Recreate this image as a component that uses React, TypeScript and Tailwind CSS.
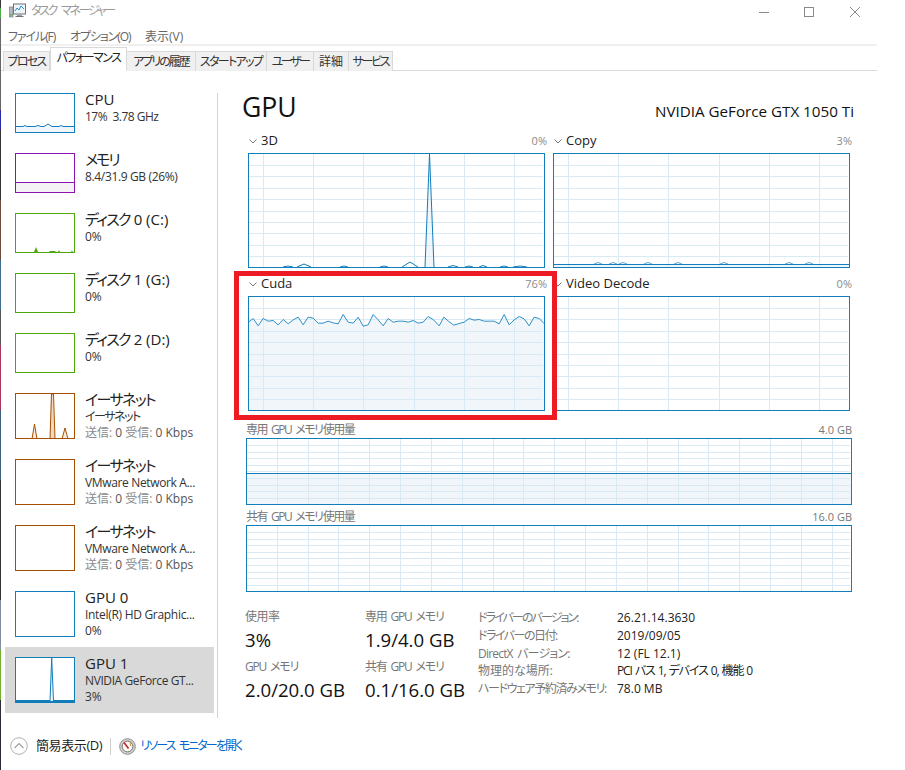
const FONT = "[font-family:'Open_Sans','Noto_Sans_CJK_JP',sans-serif] [font-feature-settings:'palt']";

const BLUE = "#117dbb";
const GRID = "#d9eaf4";
const FILL = "#f1f6fa";

const CUDA: [number, number][] = [
  [56,187],[70,176],[85,198],[100,176],[115,184],[130,182],[145,195],[160,179],[175,192],[190,180],[205,172],[220,195],[235,172],[250,175],[265,190],[280,190],[295,184],[310,189],[325,192],[340,164],[355,187],[370,190],[385,172],[400,199],[415,195],[430,164],[445,180],[460,198],[475,176],[490,187],[505,184],[520,184],[535,187],[550,182],[565,190],[580,187],[595,170],[610,179],[628,198],[642,172],[657,185],[672,196],[688,191],[703,187],[718,176],[733,181],[748,179],[763,184],[778,184],[793,184],[808,192],[823,164],[838,195],[853,180],[868,170],[883,177],[898,198],[913,172],[928,176],[942,190],
];
const cudaPts = CUDA.map(([x, y]) => [(x - 56) / 3 + 0.5, (y - 110) / 3 + 0.5] as [number, number]);

const V_SMALL = [15, 65, 115, 166, 216, 266];
const H_SMALL = [12, 23, 35, 46, 58, 69, 80, 92, 103];
const V_MEM = Array.from({ length: 19 }, (_, i) => Math.round(30.83 * (i + 1)));
const H_MEM = [7, 14, 20, 27, 33, 40, 47, 53, 60];

function Chart({ w, h, v, hz, children, under }: { w: number; h: number; v: number[]; hz: number[]; children?: React.ReactNode; under?: React.ReactNode }) {
  return (
    <svg width={w} height={h} className="block">
      {under}
      <g shapeRendering="crispEdges" stroke={GRID} strokeWidth="1">
        {v.map((x) => <line key={x} x1={x + 0.5} y1={0} x2={x + 0.5} y2={h} />)}
        {hz.map((y) => <line key={y} x1={0} y1={y + 0.5} x2={w - 2} y2={y + 0.5} />)}
      </g>
      {children}
      <rect x="0.5" y="0.5" width={w - 1} height={h - 1} fill="none" stroke={BLUE} shapeRendering="crispEdges" />
    </svg>
  );
}

function bump(cx: number, hw: number, ht: number, base: number) {
  return `M${cx - hw} ${base}L${cx} ${base - ht}L${cx + hw} ${base}`;
}

function Chart3D() {
  const base = 114;
  return (
    <Chart w={297} h={115} v={V_SMALL} hz={H_SMALL}
      under={<path d="M177 114L181.5 1L186 114Z" fill={FILL} />}>
      <path
        d={[bump(40, 5, 1, base), bump(56, 7, 3, base), bump(96, 4, 1, base), bump(136, 4, 1, base), bump(162, 8, 5, base), bump(205, 5, 1.5, base), bump(221, 4, 1, base), bump(235, 4, 1.5, base), bump(256, 4, 1, base), bump(272, 7, 1, base)].join("")}
        fill="none" stroke={BLUE} strokeWidth="1" />
      <path d="M177 114L181.5 1L186 114" fill="none" stroke={BLUE} strokeWidth="1" />
    </Chart>
  );
}

function ChartCopy() {
  return (
    <Chart w={297} h={115} v={V_SMALL} hz={H_SMALL}
      under={<rect x="0" y="111" width="297" height="4" fill={FILL} />}>
      <path d={[45, 60, 70, 95, 125, 171, 236, 256].map((c) => bump(c, 4, 1.5, 111)).join("")} fill="none" stroke="#5aa6d3" />
      <line x1="0" y1="111.5" x2="297" y2="111.5" stroke={BLUE} shapeRendering="crispEdges" />
    </Chart>
  );
}

function ChartCuda() {
  const line = cudaPts.map(([x, y], i) => `${i ? "L" : "M"}${x} ${y}`).join("");
  return (
    <Chart w={297} h={115} v={V_SMALL} hz={H_SMALL}
      under={<path d={`${line}L297 115L0 115Z`} fill={FILL} />}>
      <path d={line} fill="none" stroke="#2f8fc6" strokeWidth="1" />
    </Chart>
  );
}

function ChartMem({ usage }: { usage?: number }) {
  return (
    <Chart w={606} h={67} v={V_MEM} hz={H_MEM}
      under={usage ? <rect x="0" y={usage} width="606" height={67 - usage} fill={FILL} /> : undefined}>
      {usage ? <line x1="0" y1={usage + 0.5} x2="606" y2={usage + 0.5} stroke={BLUE} shapeRendering="crispEdges" /> : null}
    </Chart>
  );
}

function Thumb({ h, color, children }: { h: number; color: string; children?: React.ReactNode }) {
  return (
    <svg width={60} height={h} className="block shrink-0">
      <rect x="0" y="0" width="60" height={h} fill="#fff" />
      {children}
      <rect x="0.5" y="0.5" width="59" height={h - 1} fill="none" stroke={color} shapeRendering="crispEdges" />
    </svg>
  );
}

const GREEN = "#4da60c";
const BROWN = "#a74f01";
const PURPLE = "#8b12ae";

type Item = { title: React.ReactNode; lines: React.ReactNode[]; h: number; thumbH: number; color: string; art?: React.ReactNode; selected?: boolean };

const send = <span className="text-[#8a8a8a]">送信: <span className="text-[#555]">0</span> 受信: <span className="text-[#555]">0 Kbps</span></span>;
const disk = <span className="tracking-[-1.7px]">ディスク</span>;
const ether = <span className="tracking-[-1.6px]">イーサネット</span>;
const vm = <span className="tracking-[-0.35px]">VMware Network A...</span>;

const items: Item[] = [
  { title: "CPU", lines: [<span className="tracking-[-0.5px]">17%  3.78 GHz</span>], h: 60, thumbH: 40, color: BLUE, art: (
    <>
      <rect x="1" y="33" width="58" height="6" fill={FILL} />
      <path d="M1 33.5L8 33.5L10 32.5L12 33.5L20 33.5L23 32.5L26 33.5L29 33.5L33 31L37 33.5L44 33.5L46 32.5L48 33.5L59 33.5" fill="none" stroke={BLUE} />
    </>
  ) },
  { title: <span className="tracking-[-2px]">メモリ</span>, lines: [<span className="tracking-[-0.35px]">8.4/31.9 GB (26%)</span>], h: 60, thumbH: 40, color: PURPLE, art: (
    <>
      <rect x="1" y="29" width="58" height="10" fill="#f4f2f4" />
      <line x1="0" y1="29.5" x2="60" y2="29.5" stroke={PURPLE} shapeRendering="crispEdges" />
    </>
  ) },
  { title: <>{disk} 0 (C:)</>, lines: ["0%"], h: 60, thumbH: 40, color: GREEN, art: (
    <path d="M19 39L21 34L23 39ZM34 39L35 38L40 38L41 39ZM43 39L44 37L45 39ZM56 39L57 37.5L58 39Z" fill={GREEN} />
  ) },
  { title: <>{disk} 1 (G:)</>, lines: ["0%"], h: 60, thumbH: 40, color: GREEN },
  { title: <>{disk} 2 (D:)</>, lines: ["0%"], h: 60, thumbH: 40, color: GREEN },
  { title: ether, lines: [<span className="tracking-[-1.5px]">イーサネット</span>, send], h: 66, thumbH: 46, color: BROWN, art: (
    <>
      <path d="M17 46L19.5 31L22 46Z" fill="#f6ebe0" />
      <path d="M17 46L19.5 31L22 46" fill="none" stroke={BROWN} />
      <path d="M35 46L36 1L38 1L40 46Z" fill="#f0d9c4" />
      <path d="M35 46L36.5 1L38.5 1L40 46" fill="none" stroke={BROWN} />
      <path d="M47 46L50 35L53 46Z" fill="#f6ebe0" />
      <path d="M47 46L50 35L53 46" fill="none" stroke={BROWN} />
    </>
  ) },
  { title: ether, lines: [vm, send], h: 66, thumbH: 46, color: BROWN },
  { title: ether, lines: [vm, send], h: 66, thumbH: 46, color: BROWN },
  { title: "GPU 0", lines: [<span className="tracking-[-0.3px]">Intel(R) HD Graphic...</span>, "0%"], h: 66, thumbH: 46, color: BLUE },
  { title: "GPU 1", lines: [<span className="tracking-[-0.4px]">NVIDIA GeForce GT...</span>, "3%"], h: 66, thumbH: 46, color: BLUE, selected: true, art: (
    <>
      <rect x="1" y="43" width="58" height="2" fill={BLUE} />
      <path d="M35 44L36.7 1L38.5 44Z" fill={FILL} />
      <path d="M35 44L36.7 1L38.5 44" fill="none" stroke={BLUE} />
    </>
  ) },
];

function SideItem({ item }: { item: Item }) {
  return (
    <div className={`flex pl-[10px] pt-[10px] gap-[10px] ${item.selected ? "bg-[#d9d9d9]" : ""}`} style={{ height: item.h }}>
      <Thumb h={item.thumbH} color={item.color}>{item.art}</Thumb>
      <div className="-mt-[3px] whitespace-pre text-[#333]">
        <div className="text-[15px] leading-[18px] text-[#222]">{item.title}</div>
        <div className="mt-[1px]">
          {item.lines.map((l, i) => <div key={i} className="text-[12px] leading-[16px]">{l}</div>)}
        </div>
      </div>
    </div>
  );
}

function Chevron() {
  return (
    <svg width="8" height="5" viewBox="0 0 8 5" className="shrink-0">
      <path d="M0.5 0.5L4 4L7.5 0.5" fill="none" stroke="#777" strokeWidth="1" />
    </svg>
  );
}

function ChartHeader({ name, pct, cls }: { name: string; pct: string; cls: string }) {
  return (
    <div className={`flex items-center -mr-[2px] pl-[1px] ${cls}`}>
      <Chevron />
      <span className="ml-[4px] text-[13px] text-[#222]">{name}</span>
      <span className="ml-auto text-[11px] text-[#8a8a8a]">{pct}</span>
    </div>
  );
}

function MemHeader({ name, max, cls }: { name: string; max: string; cls: string }) {
  return (
    <div className={`flex items-end text-[12px] leading-[16px] text-[#777] ${cls}`}>
      <span className="tracking-[-1.4px] [word-spacing:2px]">{name}</span>
      <span className="ml-auto text-[11px]">{max}</span>
    </div>
  );
}

function Stat({ label, value, cls, track }: { label: string; value: string; cls?: string; track?: string }) {
  return (
    <div className={cls}>
      <div className={`text-[12px] leading-[16px] text-[#777] ${track ?? ""}`}>{label}</div>
      <div className="mt-[3px] text-[18.6px] leading-[24px] text-[#111] whitespace-nowrap">{value}</div>
    </div>
  );
}

const details = [
  ["ドライバーのバージョン:", "tracking-[-1.9px]", "26.21.14.3630", ""],
  ["ドライバーの日付:", "tracking-[-1.5px]", "2019/09/05", ""],
  ["DirectX バージョン:", "tracking-[-0.8px] [word-spacing:2px]", "12 (FL 12.1)", ""],
  ["物理的な場所:", "", "PCI バス 1, デバイス 0, 機能 0", "tracking-[-1.1px] [word-spacing:1px]"],
  ["ハードウェア予約済みメモリ:", "tracking-[-1.4px]", "78.0 MB", ""],
];

const tabs = [
  ["プロセス", "w-[47px] tracking-[-1.75px]"],
  ["パフォーマンス", "w-[77px] tracking-[-1.5px]"],
  ["アプリの履歴", "w-[70px] tracking-[-2px]"],
  ["スタートアップ", "w-[72px] tracking-[-1.7px]"],
  ["ユーザー", "w-[48px] tracking-[-2.5px]"],
  ["詳細", "w-[36px]"],
  ["サービス", "w-[45px] tracking-[-2.2px]"],
];

function AppIcon() {
  return (
    <svg width="17" height="16" viewBox="0 0 17 16">
      <rect x="0.5" y="4" width="3.5" height="10" fill="#b5bcc0" stroke="#6d7478" strokeWidth="0.6" />
      <rect x="1" y="11" width="2.5" height="1.5" fill="#5fae4f" />
      <rect x="4.5" y="1" width="12" height="10" fill="#eef5fa" stroke="#6d7478" />
      <path d="M6 8L8 5L10 7L12 3L15 6" fill="none" stroke="#2f8fc6" />
      <rect x="8" y="11.5" width="5" height="1.5" fill="#9aa2a6" />
      <rect x="6.5" y="13" width="8" height="1" fill="#6d7478" />
    </svg>
  );
}

function MonitorIcon() {
  return (
    <svg width="17" height="17" viewBox="0 0 17 17">
      <circle cx="8.5" cy="8.5" r="7.8" fill="#d8d6d2" stroke="#8a8a86" />
      <circle cx="8.5" cy="8.5" r="5.4" fill="#fbf9f4" stroke="#6e6e6a" />
      <path d="M5 4.5L9.5 10.5" stroke="#c8202a" strokeWidth="1.6" />
      <path d="M11 4.5L11.8 8" stroke="#d98b2b" strokeWidth="1" />
    </svg>
  );
}

function UpIcon() {
  return (
    <svg width="18" height="18" viewBox="0 0 18 18">
      <circle cx="9" cy="9" r="8.3" fill="#fff" stroke="#b0b0b0" strokeWidth="1" />
      <path d="M4.5 11L9 6.5L13.5 11" fill="none" stroke="#a0a0a0" strokeWidth="1.2" />
    </svg>
  );
}

export default function App() {
  return (
    <div className={`relative flex h-[770px] w-[905px] overflow-hidden bg-white ${FONT}`}>
      <div className="flex w-px shrink-0 flex-col">
        <div className="h-[8px] bg-[#3a3a3a]" />
        <div className="h-[10px] bg-[#4fae4a]" />
        <div className="h-[92px] bg-[#666]" />
        <div className="h-[20px] bg-[#2a2aa8]" />
        <div className="h-[70px] bg-[#333]" />
        <div className="h-[60px] bg-[#6a4a3a]" />
        <div className="h-[50px] bg-[#3f6f8f]" />
        <div className="h-[35px] bg-[#555]" />
        <div className="h-[65px] bg-[#a83a5a]" />
        <div className="h-[70px] bg-[#3f5f7f]" />
        <div className="h-[120px] bg-[#333]" />
        <div className="h-[50px] bg-[#7f8f9f]" />
        <div className="h-[50px] bg-[#6fae2a]" />
        <div className="flex-1 bg-[#2a2a3a]" />
      </div>

      <div className="flex w-[876px] shrink-0 flex-col">
        {/* title bar */}
        <div className="flex h-[25px] items-center">
          <div className="ml-[8px] mt-[-3px]"><AppIcon /></div>
          <span className="ml-[5px] mt-[-3px] whitespace-pre text-[12px] tracking-[-2.3px] [word-spacing:4px] text-[#9a9a9a]">タスク マネージャー</span>
          <div className="ml-auto mr-[17px] flex items-start">
            <svg width="10" height="10" className="mt-[1px]"><line x1="0" y1="4.5" x2="10" y2="4.5" stroke="#8a8a8a" shapeRendering="crispEdges" /></svg>
            <svg width="10" height="10" className="ml-[35px]"><rect x="0.5" y="0.5" width="9" height="9" fill="none" stroke="#8a8a8a" shapeRendering="crispEdges" /></svg>
            <svg width="10" height="10" className="ml-[36px]"><path d="M0 0L10 10M10 0L0 10" stroke="#8a8a8a" strokeWidth="1" /></svg>
          </div>
        </div>
        {/* menu */}
        <div className="flex h-[19px] items-center pl-[7px] pt-[4px] text-[12px] text-[#666]">
          <span className="w-[62px] tracking-[-1.1px]">ファイル(F)</span>
          <span className="w-[75px] tracking-[-1.1px]">オプション(O)</span>
          <span>表示(V)</span>
        </div>
        <div className="h-[2px] bg-[#f0f0f0]" />
        {/* tabs */}
        <div className="flex h-[25px] items-end border-b border-[#d9d9d9] pl-[2px]">
          {tabs.map(([t, cls], i) => (
            <div
              key={t}
              className={`flex items-center justify-center whitespace-nowrap text-[12px] border border-[#d9d9d9] -mb-px ${cls} ${
                i === 1
                  ? "relative z-10 h-[24px] border-b-white bg-white pb-[3px] text-[#222]"
                  : "h-[20px] border-b-0 -ml-px first:ml-0 bg-[#f0f0f0] text-[#333]"
              }`}
            >
              {t}
            </div>
          ))}
        </div>

        {/* body */}
        <div className="flex h-[647px]">
          <div className="ml-[4px] mr-[3px] w-[209px] shrink-0 pt-[12px]">
            {items.map((it, i) => <SideItem key={i} item={it} />)}
          </div>
          <div className="mt-[22px] w-px shrink-0 bg-[#d4d4d4]" />
          <div className="w-[606px] ml-[28px] shrink-0">
            <div className="-ml-[4px] flex h-[56px] items-center justify-between -mr-[2px]">
              <span className="mt-[16px] text-[26.6px] leading-[36px] text-[#111]">GPU</span>
              <span className="mt-[24px] text-[15.2px] text-[#111]">NVIDIA GeForce GTX 1050 Ti</span>
            </div>
            <div className="ml-[2px] grid w-[602px] grid-cols-[297px_297px] gap-x-[8px]">
              <div>
                <ChartHeader name="3D" pct="0%" cls="h-[26px] pt-[2px]" />
                <Chart3D />
              </div>
              <div>
                <ChartHeader name="Copy" pct="3%" cls="h-[26px] pt-[2px]" />
                <ChartCopy />
              </div>
              <div>
                <ChartHeader name="Cuda" pct="76%" cls="h-[28px] pt-[4px]" />
                <ChartCuda />
              </div>
              <div>
                <ChartHeader name="Video Decode" pct="0%" cls="h-[28px] pt-[4px]" />
                <Chart w={297} h={115} v={V_SMALL} hz={H_SMALL} />
              </div>
            </div>
            <MemHeader name="専用 GPU メモリ使用量" max="4.0 GB" cls="h-[27px]" />
            <ChartMem usage={35} />
            <MemHeader name="共有 GPU メモリ使用量" max="16.0 GB" cls="h-[20px]" />
            <ChartMem />
            <div className="-ml-[1px] flex pt-[17px]">
              <div className="w-[120px]">
                <Stat label="使用率" value="3%" track="tracking-[-0.5px]" />
                <Stat label="GPU メモリ" value="2.0/20.0 GB" cls="mt-[7px]" track="tracking-[-1.2px] [word-spacing:2px]" />
              </div>
              <div className="w-[113px]">
                <Stat label="専用 GPU メモリ" value="1.9/4.0 GB" track="tracking-[-1.2px] [word-spacing:2px]" />
                <Stat label="共有 GPU メモリ" value="0.1/16.0 GB" cls="mt-[7px]" track="tracking-[-1.2px] [word-spacing:2px]" />
              </div>
              <div className="grid grid-cols-[139px_auto] auto-rows-[17.75px] text-[12px] leading-[17.75px] whitespace-nowrap">
                {details.map(([k, kt, v, vt]) => (
                  <div key={k} className="contents">
                    <span className={`text-[#777] ${kt}`}>{k}</span>
                    <span className={`text-[#222] ${vt}`}>{v}</span>
                  </div>
                ))}
              </div>
            </div>
          </div>
        </div>

        {/* footer */}
        <div className="flex flex-1 items-center pl-[9px] pt-[4px]">
          <UpIcon />
          <span className="ml-[8px] text-[13px] tracking-[-0.4px] text-[#222]">簡易表示(D)</span>
          <div className="ml-[8px] h-[17px] w-px bg-[#cfcfcf]" />
          <div className="ml-[8px]"><MonitorIcon /></div>
          <span className="ml-[4px] whitespace-pre text-[12px] tracking-[-1.9px] [word-spacing:3px] text-[#0066cc]">リソース モニターを開く</span>
        </div>
      </div>

      {/* annotation box drawn over the screenshot */}
      <div className="pointer-events-none absolute left-[234px] top-[271px] z-20 h-[149px] w-[323px] border-[5px] border-[#ed1c24]" />
    </div>
  );
}
